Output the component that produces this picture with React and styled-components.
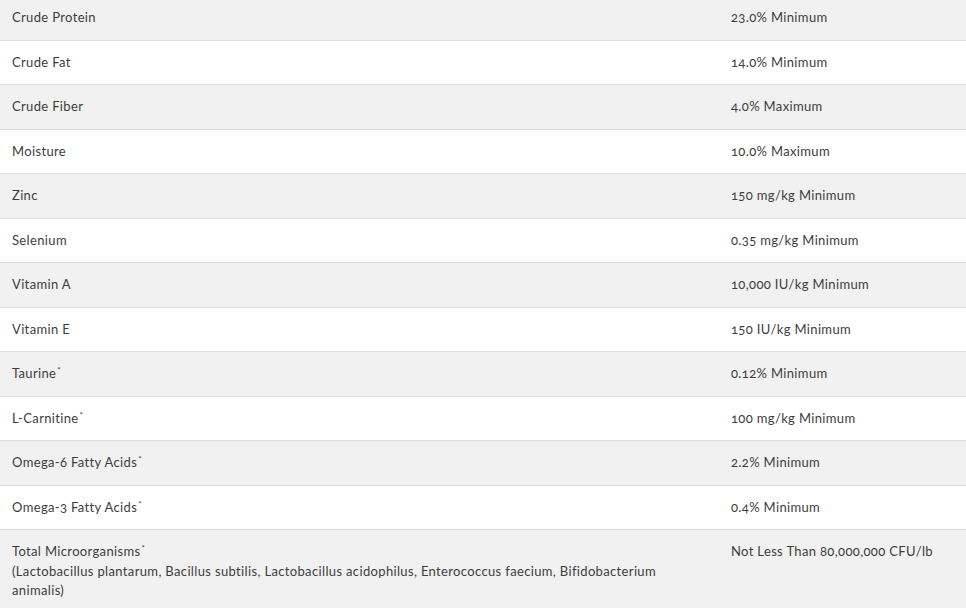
import React from 'react';
import styled, { createGlobalStyle } from 'styled-components';

const GlobalStyle = createGlobalStyle`
	html, body {
		margin: 0;
		padding: 0;
		background: #ffffff;
	}
	body {
		font-family: Lato, 'Open Sans', sans-serif;
		color: #3d3d3d;
	}
`;

const Table = styled.div`
	width: 966px;
	margin-top: -4px;
	display: flex;
	flex-direction: column;
	font-size: 13px;
	line-height: 19.5px;
	letter-spacing: 0.35px;
	font-variant-numeric: oldstyle-nums;
	font-feature-settings: 'onum' 1;
`;

const Row = styled.div`
	display: grid;
	grid-template-columns: 719px 1fr;
	background: ${(p) => (p.$shaded ? '#f1f1f1' : '#ffffff')};
	border-bottom: 1px solid #dedede;
`;

const Cell = styled.div`
	padding: 12px;
`;

const Star = styled.sup`
	font-size: 8px;
	line-height: 0;
	vertical-align: 5px;
	margin-left: 1px;
`;

const rows = [
	['Crude Protein', '23.0% Minimum'],
	['Crude Fat', '14.0% Minimum'],
	['Crude Fiber', '4.0% Maximum'],
	['Moisture', '10.0% Maximum'],
	['Zinc', '150 mg/kg Minimum'],
	['Selenium', '0.35 mg/kg Minimum'],
	['Vitamin A', '10,000 IU/kg Minimum'],
	['Vitamin E', '150 IU/kg Minimum'],
	['Taurine', '0.12% Minimum', true],
	['L-Carnitine', '100 mg/kg Minimum', true],
	['Omega-6 Fatty Acids', '2.2% Minimum', true],
	['Omega-3 Fatty Acids', '0.4% Minimum', true],
];

export default function App() {
	return (
		<>
			<GlobalStyle />
			<Table>
				{rows.map(([name, value, star], i) => (
					<Row key={name} $shaded={i % 2 === 0}>
						<Cell>
							{name}
							{star && <Star>*</Star>}
						</Cell>
						<Cell>{value}</Cell>
					</Row>
				))}
				<Row $shaded>
					<Cell>
						Total Microorganisms<Star>*</Star>
						<br />
						(Lactobacillus plantarum, Bacillus subtilis, Lactobacillus acidophilus, Enterococcus faecium, Bifidobacterium animalis)
					</Cell>
					<Cell>Not Less Than 80,000,000 CFU/lb</Cell>
				</Row>
			</Table>
		</>
	);
}
